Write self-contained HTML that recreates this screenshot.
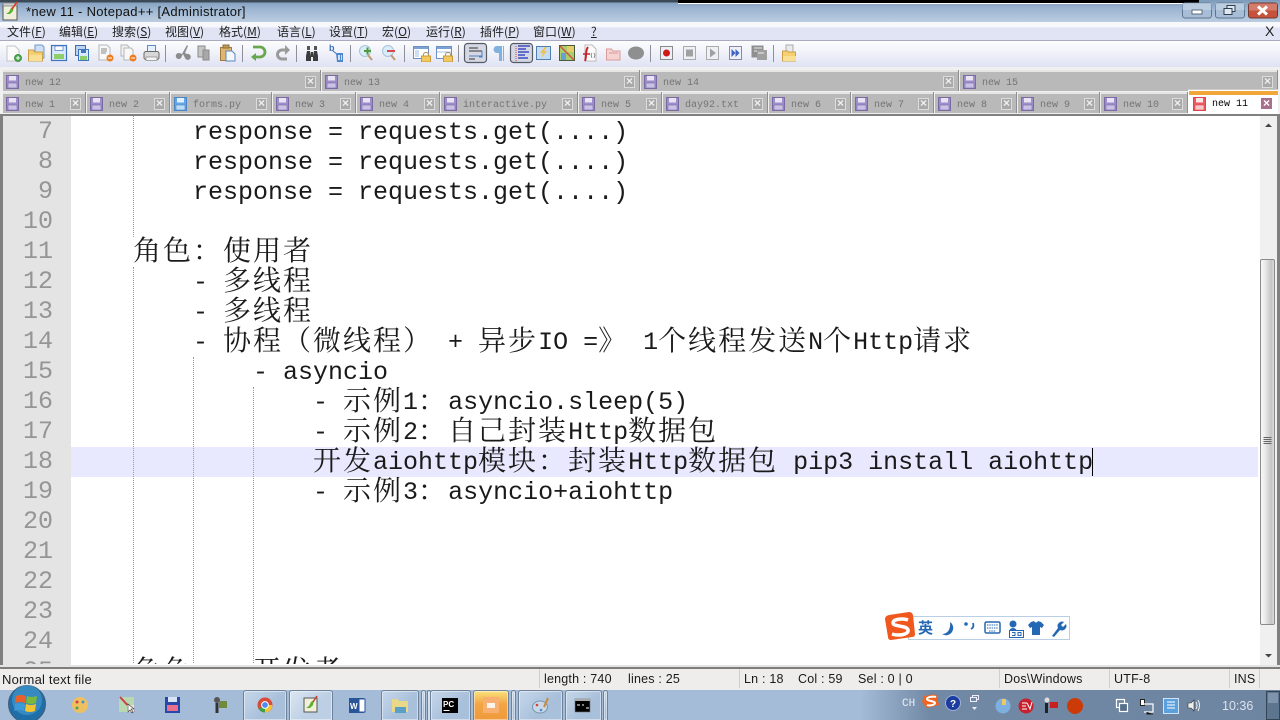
<!DOCTYPE html>
<html lang="zh"><head><meta charset="utf-8"><title>Notepad++</title>
<style>
html,body{margin:0;padding:0;width:1280px;height:720px;overflow:hidden;background:#fff}
body{position:relative;font-family:"Liberation Sans","Noto Sans CJK SC",sans-serif}
div,span.a{position:absolute}
#title{left:0;top:0;width:1280px;height:22px;background:linear-gradient(#7d9bbb,#9cb5d1 40%,#bccde1)}
#title .t{left:26px;top:4px;font-size:13px;letter-spacing:.3px;line-height:16px;color:#111;white-space:pre}
#menu{left:0;top:22px;width:1280px;height:19px;background:linear-gradient(#f7f8fc,#f7f8fc 25%,#dfe3f3 35%,#e0e4f4);border-bottom:1px solid #a9aabd;box-sizing:border-box}
#menu span{position:absolute;top:2px;font-size:12px;line-height:16px;color:#222;white-space:pre;font-family:"Noto Sans CJK SC","Liberation Sans",sans-serif}
#tool{left:0;top:41px;width:1280px;height:26px;background:linear-gradient(#fdfdfe,#f2f3fa 40%,#dfe2f3)}
#tabs{left:0;top:67px;width:1280px;height:47px;background:#f0f0f0}
.tab{background:#b9b9b9;border-top:2px solid #e6e6e6;box-sizing:border-box;height:21px;box-shadow:1px 0 0 #8e8e8e}
.r1{top:3px}.r2{top:25px}
.tab .n{left:22px;top:5px;font:10px/14px "Liberation Mono",monospace;color:#747474;white-space:pre}
.tab .x{top:4px;width:11px;height:12px;background:#a9a9a9;border:1px solid #dcdcdc;box-sizing:border-box;color:#f0f0f0;font:bold 12px/9px "Liberation Sans",sans-serif;text-align:center}
.tab svg{position:absolute;left:3px;top:3px}
#ed{left:0;top:114px;width:1280px;height:553px;background:#fff;border:solid #808080;border-width:2px 3px 2px 3px;box-sizing:border-box}
#gut{left:3px;top:116px;width:68px;height:549px;background:#e4e4e4}
#cur{left:71px;top:447px;width:1187px;height:30px;background:#e8e8ff}
.g{width:0;border-left:1px dotted #9a9a9a}
.l{height:30px;font:25px/30px "Liberation Mono",monospace;color:#1a1a1a;white-space:pre;margin-top:1px}
.l i{font:28px/0 "Noto Serif CJK SC","Noto Sans CJK SC",serif;letter-spacing:2px;position:relative;top:1px}
.ln{left:3px;width:50px;height:30px;text-align:right;font:25px/30px "Liberation Mono",monospace;color:#959595}
#clip{left:0;top:116px;width:1280px;height:548px;overflow:hidden}
#sb{left:1260px;top:116px;width:17px;height:549px;background:#f0f0f0}
#th{left:0;top:143px;width:15px;height:366px;border:1px solid #8b8b8b;border-radius:2px;box-sizing:border-box;background:linear-gradient(90deg,#f7f7f7,#eee 25%,#c4c4c4 80%,#dcdcdc)}
#st{left:0;top:669px;width:1280px;height:21px;background:#efecec;border-top:0}
#st span{position:absolute;top:2px;font-size:12.5px;letter-spacing:.2px;line-height:17px;color:#1a1a1a;white-space:pre}
#st u{position:absolute;top:0;width:1px;height:19px;background:#cfcfcf;text-decoration:none}
#tb{left:0;top:690px;width:1280px;height:30px;background:linear-gradient(90deg,#a5bcd8,#a5bcd8 860px,#7189a5 930px,#6d85a1)}
.b{top:0;height:30px;border:1px solid #6e829a;border-bottom:0;border-radius:3px 3px 0 0;box-sizing:border-box;background:linear-gradient(135deg,#c6d7ea,#a9c0db 60%);box-shadow:inset 0 0 0 1px rgba(255,255,255,.45)}
#ch{left:902px;top:697px;font:11px/14px "Liberation Mono",monospace;color:#e8eef5}
#clock{left:1222px;top:698px;font-size:12.5px;line-height:16px;color:#dbe3ec}
#sg{left:908px;top:616px;width:162px;height:24px;background:#fff;border:1px solid #b9cfe6;box-sizing:border-box}
#ying{left:918px;top:619px;font:bold 15px/18px "Noto Sans CJK SC",sans-serif;color:#2468b4}
#svg{left:0;top:0;position:absolute}
</style></head><body>

<div id="title"><div class="t">*new 11 - Notepad++ [Administrator]</div></div>
<div id="menu">
<span style="left:7px">文件(<u>F</u>)</span><span style="left:59px">编辑(<u>E</u>)</span><span style="left:112px">搜索(<u>S</u>)</span><span style="left:165px">视图(<u>V</u>)</span><span style="left:219px">格式(<u>M</u>)</span><span style="left:277px">语言(<u>L</u>)</span><span style="left:329px">设置(<u>T</u>)</span><span style="left:382px">宏(<u>O</u>)</span><span style="left:426px">运行(<u>R</u>)</span><span style="left:480px">插件(<u>P</u>)</span><span style="left:533px">窗口(<u>W</u>)</span><span style="left:591px"><u>?</u></span>
<span style="left:1265px;top:1px;font-size:14px;font-family:'Liberation Sans',sans-serif">X</span>
</div>
<div id="tool"></div>

<div id="tabs">
<div class="tab r1" style="left:3px;width:317px"><svg width="14" height="14"><use href="#fp"/></svg><div class="n">new 12</div><div class="x" style="left:302px">×</div></div>
<div class="tab r1" style="left:322px;width:317px"><svg width="14" height="14"><use href="#fp"/></svg><div class="n">new 13</div><div class="x" style="left:302px">×</div></div>
<div class="tab r1" style="left:641px;width:317px"><svg width="14" height="14"><use href="#fp"/></svg><div class="n">new 14</div><div class="x" style="left:302px">×</div></div>
<div class="tab r1" style="left:960px;width:317px"><svg width="14" height="14"><use href="#fp"/></svg><div class="n">new 15</div><div class="x" style="left:302px">×</div></div>

<div class="tab r2" style="left:3px;width:82px"><svg width="14" height="14"><use href="#fp"/></svg><div class="n">new 1</div><div class="x" style="left:67px">×</div></div>
<div class="tab r2" style="left:87px;width:82px"><svg width="14" height="14"><use href="#fp"/></svg><div class="n">new 2</div><div class="x" style="left:67px">×</div></div>
<div class="tab r2" style="left:171px;width:100px"><svg width="14" height="14"><use href="#fb"/></svg><div class="n">forms.py</div><div class="x" style="left:85px">×</div></div>
<div class="tab r2" style="left:273px;width:82px"><svg width="14" height="14"><use href="#fp"/></svg><div class="n">new 3</div><div class="x" style="left:67px">×</div></div>
<div class="tab r2" style="left:357px;width:82px"><svg width="14" height="14"><use href="#fp"/></svg><div class="n">new 4</div><div class="x" style="left:67px">×</div></div>
<div class="tab r2" style="left:441px;width:136px"><svg width="14" height="14"><use href="#fp"/></svg><div class="n">interactive.py</div><div class="x" style="left:121px">×</div></div>
<div class="tab r2" style="left:579px;width:82px"><svg width="14" height="14"><use href="#fp"/></svg><div class="n">new 5</div><div class="x" style="left:67px">×</div></div>
<div class="tab r2" style="left:663px;width:104px"><svg width="14" height="14"><use href="#fp"/></svg><div class="n">day92.txt</div><div class="x" style="left:89px">×</div></div>
<div class="tab r2" style="left:769px;width:81px"><svg width="14" height="14"><use href="#fp"/></svg><div class="n">new 6</div><div class="x" style="left:66px">×</div></div>
<div class="tab r2" style="left:852px;width:81px"><svg width="14" height="14"><use href="#fp"/></svg><div class="n">new 7</div><div class="x" style="left:66px">×</div></div>
<div class="tab r2" style="left:935px;width:81px"><svg width="14" height="14"><use href="#fp"/></svg><div class="n">new 8</div><div class="x" style="left:66px">×</div></div>
<div class="tab r2" style="left:1018px;width:81px"><svg width="14" height="14"><use href="#fp"/></svg><div class="n">new 9</div><div class="x" style="left:66px">×</div></div>
<div class="tab r2" style="left:1101px;width:86px"><svg width="14" height="14"><use href="#fp"/></svg><div class="n">new 10</div><div class="x" style="left:71px">×</div></div>
<div style="left:1188px;top:22px;width:90px;height:25px;background:#fff;border-top:1px solid #ccc;box-sizing:border-box"><div style="left:1px;top:1px;width:89px;height:4px;background:#f2a73a"></div>
<svg width="14" height="14" style="position:absolute;left:5px;top:7px"><use href="#fr"/></svg>
<div style="left:24px;top:8px;font:10px/14px 'Liberation Mono',monospace;color:#000;white-space:pre">new 11</div>
<div style="left:73px;top:8px;width:11px;height:11px;background:#a8708c;color:#fff;font:bold 12px/10px 'Liberation Sans',sans-serif;text-align:center">×</div></div>
</div>

<div id="ed"></div>
<div id="gut"></div>
<div id="cur"></div>
<div id="clip">
<div class="g" style="left:133px;top:0;height:121px"></div>
<div class="g" style="left:133px;top:151px;height:398px"></div>
<div class="g" style="left:193px;top:241px;height:308px"></div>
<div class="g" style="left:253px;top:271px;height:278px"></div>

<div class="ln" style="top:1px">7</div>
<div class="ln" style="top:31px">8</div>
<div class="ln" style="top:61px">9</div>
<div class="ln" style="top:91px">10</div>
<div class="ln" style="top:121px">11</div>
<div class="ln" style="top:151px">12</div>
<div class="ln" style="top:181px">13</div>
<div class="ln" style="top:211px">14</div>
<div class="ln" style="top:241px">15</div>
<div class="ln" style="top:271px">16</div>
<div class="ln" style="top:301px">17</div>
<div class="ln" style="top:331px">18</div>
<div class="ln" style="top:361px">19</div>
<div class="ln" style="top:391px">20</div>
<div class="ln" style="top:421px">21</div>
<div class="ln" style="top:451px">22</div>
<div class="ln" style="top:481px">23</div>
<div class="ln" style="top:511px">24</div>
<div class="ln" style="top:541px">25</div>

<div class="l" style="left:193px;top:1px">response = requests.get(....)</div>
<div class="l" style="left:193px;top:31px">response = requests.get(....)</div>
<div class="l" style="left:193px;top:61px">response = requests.get(....)</div>
<div class="l" style="left:133px;top:121px"><i>角色：使用者</i></div>
<div class="l" style="left:193px;top:151px">- <i>多线程</i></div>
<div class="l" style="left:193px;top:181px">- <i>多线程</i></div>
<div class="l" style="left:193px;top:211px">- <i>协程（微线程）</i> + <i>异步</i>IO =<i>》</i> 1<i>个线程发送</i>N<i>个</i>Http<i>请求</i></div>
<div class="l" style="left:253px;top:241px">- asyncio</div>
<div class="l" style="left:313px;top:271px">- <i>示例</i>1<i>：</i>asyncio.sleep(5)</div>
<div class="l" style="left:313px;top:301px">- <i>示例</i>2<i>：自己封装</i>Http<i>数据包</i></div>
<div class="l" style="left:313px;top:331px"><i>开发</i>aiohttp<i>模块：封装</i>Http<i>数据包</i> pip3 install aiohttp</div>
<div class="l" style="left:313px;top:361px">- <i>示例</i>3<i>：</i>asyncio+aiohttp</div>
<div class="l" style="left:133px;top:541px"><i>角色：</i>  <i>开发者</i></div>
<div style="left:1092px;top:332px;width:1px;height:28px;background:#000"></div>
</div>

<div id="sb"><div id="th"></div></div>

<div style="left:0;top:665px;width:1280px;height:2px;background:#e4e4e4"></div>
<div style="left:0;top:667px;width:1280px;height:2px;background:#7d7d7d"></div>
<div id="st">
<span style="left:2px;font-size:13px">Normal text file</span>
<u style="left:539px"></u><span style="left:544px">length : 740</span><span style="left:628px">lines : 25</span>
<u style="left:739px"></u><span style="left:744px">Ln : 18</span><span style="left:798px">Col : 59</span><span style="left:858px">Sel : 0 | 0</span>
<u style="left:999px"></u><span style="left:1004px">Dos\Windows</span>
<u style="left:1109px"></u><span style="left:1114px">UTF-8</span>
<u style="left:1229px"></u><span style="left:1234px">INS</span>
<u style="left:1259px"></u>
</div>

<div id="tb">
<div class="b" style="left:243px;width:44px"></div>
<div class="b" style="left:289px;width:44px;background:linear-gradient(135deg,#dbe6f2,#bccfe4 60%)"></div>
<div class="b" style="left:381px;width:38px"></div>
<div class="b" style="left:421px;width:5px"></div>
<div class="b" style="left:427px;width:4px"></div>
<div class="b" style="left:430px;width:41px"></div>
<div class="b" style="left:473px;width:36px;background:linear-gradient(#f9e27a,#f2a545 45%,#f09a3c)"></div>
<div class="b" style="left:511px;width:5px"></div>
<div class="b" style="left:518px;width:45px"></div>
<div class="b" style="left:565px;width:37px"></div>
<div class="b" style="left:603px;width:5px"></div>
</div>
<div id="sg"></div>

<svg id="svg" width="1280" height="720" viewBox="0 0 1280 720">
<defs>
<symbol id="fp" viewBox="0 0 14 14"><rect x=".5" y=".5" width="12" height="13" fill="#9d8dc9" stroke="#7c6aa5"/><rect x="3" y="1" width="7" height="4.5" fill="#e8e4f4"/><rect x="2" y="8" width="9" height="5" fill="#c8c2e6" stroke="#7c6aa5" stroke-width=".6"/></symbol>
<symbol id="fb" viewBox="0 0 14 14"><rect x=".5" y=".5" width="12" height="13" fill="#61a5e8" stroke="#4a86c4"/><rect x="3" y="1" width="7" height="4.5" fill="#e2f0fc"/><rect x="2" y="8" width="9" height="5" fill="#bcdcf6" stroke="#4a86c4" stroke-width=".6"/></symbol>
<symbol id="fr" viewBox="0 0 14 14"><rect x=".5" y=".5" width="12" height="13" fill="#ec5a60" stroke="#d84a50"/><rect x="3" y="1" width="7" height="4.5" fill="#fde8e8"/><rect x="2" y="8" width="9" height="5" fill="#f8c8c8" stroke="#d84a50" stroke-width=".6"/></symbol>
<symbol id="lock" viewBox="0 0 10 10"><path d="M2.5 4V2.5a2.5 2 0 0 1 5 0V4" fill="none" stroke="#a89060"/><rect x="0.5" y="4" width="9" height="6" fill="#f3c95e" stroke="#c89b3a"/></symbol>
</defs>

<!-- top edge -->
<rect x="0" y="0" width="678" height="2" fill="#3c4a58"/>
<rect x="0" y="2" width="678" height="1" fill="#64798f"/>
<rect x="678" y="0" width="521" height="3" fill="#000"/>
<rect x="678" y="3" width="521" height="1" fill="#fff"/>

<!-- title icon -->
<g><rect x="3" y="5" width="14" height="15" fill="#eeeeda" stroke="#555"/><rect x="3" y="3" width="14" height="3" fill="#cfcfcf" stroke="#666" stroke-width=".6"/><path d="M6 14l3-2 2-4 3-2-1 5-3 3z" fill="#5cae2e"/><path d="M12 9l5-7" stroke="#d8402c" stroke-width="1.6"/></g>

<!-- window buttons -->
<g stroke="#5c7690"><rect x="1182.5" y="3" width="29" height="15" rx="2.5" fill="#a8bdd6"/><rect x="1215.5" y="3" width="29" height="15" rx="2.5" fill="#a8bdd6"/></g>
<rect x="1248.5" y="3" width="29" height="15" rx="2.5" fill="#c4523c" stroke="#74382e"/>
<rect x="1182.5" y="3" width="29" height="7" fill="#c6d5e6" opacity=".6"/><rect x="1215.5" y="3" width="29" height="7" fill="#c6d5e6" opacity=".6"/><rect x="1249" y="3.5" width="28" height="7" fill="#e09a8a" opacity=".6"/>
<rect x="1192" y="10" width="10" height="4" fill="#fff" stroke="#3e4f60" stroke-width=".8"/>
<g fill="#dfe8f2" stroke="#2f4051"><rect x="1227" y="5.500" width="8" height="6"/><rect x="1224" y="8.500" width="8" height="6"/></g>
<path d="M1258 6.500l9 8M1267 6.500l-9 8" stroke="#fff" stroke-width="3"/>

<!-- toolbar separators -->
<g stroke="#8e8f9a"><path d="M165.500 45v17M242.500 45v17M296.500 45v17M350.500 45v17M404.500 45v17M458.500 45v17M650.500 45v17M773.500 45v17"/></g>

<!-- new -->
<path d="M7 46h8l4 4v11H7z" fill="#fbfbfb" stroke="#c4c4c4"/><circle cx="18" cy="58" r="3.600" fill="#46a846" stroke="#2e7a2e" stroke-width=".6"/><path d="M16 58h4M18 56v4" stroke="#fff"/>
<!-- open -->
<path d="M35 45h7l2 2v11h-9z" fill="#cfe0f5" stroke="#6f96cc"/><path d="M28.500 50h5l1 2h8v9h-14z" fill="#f6cf70" stroke="#c9a04a"/><path d="M29 55h13v6H29z" fill="#f9df94"/>
<!-- save -->
<rect x="51.500" y="45.500" width="15" height="15" fill="#d9e8fa" stroke="#3f74c0" stroke-width="1.200"/><rect x="55" y="46" width="8" height="4.500" fill="#fff" stroke="#3f74c0" stroke-width=".7"/><rect x="54" y="54" width="10" height="5" fill="#8fcf6a"/>
<!-- save all -->
<rect x="75.500" y="45.500" width="10" height="10" fill="#bcd4ef" stroke="#3f6faa"/><rect x="78.500" y="49.500" width="10" height="11" fill="#d9e8fa" stroke="#3f74c0"/><rect x="80" y="56" width="7" height="4" fill="#8fcf6a"/><rect x="81" y="50" width="5" height="3" fill="#3f74c0"/>
<!-- close -->
<path d="M99 45h8l3 3v12H99z" fill="#f8f8f8" stroke="#b6b6b6"/><path d="M101 49h6M101 51h6M101 53h5" stroke="#888"/><circle cx="110" cy="58" r="3.500" fill="#ee7d20"/><path d="M108 58h4" stroke="#fff"/>
<!-- close all -->
<path d="M121 45h6l2 2v9h-8z" fill="#f1f1f1" stroke="#b6b6b6"/><path d="M124 48h7l2 2v10h-9z" fill="#f8f8f8" stroke="#b6b6b6"/><circle cx="133" cy="58" r="3.500" fill="#ee7d20"/><path d="M131 58h4" stroke="#fff"/>
<!-- print -->
<rect x="147.500" y="45.500" width="8" height="7" fill="#e6f0fb" stroke="#5f8ac4"/><rect x="144" y="51.500" width="15" height="8" rx="2" fill="#d8d8d8" stroke="#6a6a6a"/><rect x="146" y="57" width="11" height="3.500" fill="#f4f4f4" stroke="#777" stroke-width=".6"/>
<!-- cut, copy, paste (disabled) -->
<path d="M187 45l-5 9-3-1a3 3 0 1 0 2 5l2-4 2 4a3 3 0 1 0 2-4l-2-1 3-7z" fill="#8c8c8c"/>
<g fill="#c6c6c6" stroke="#8a8a8a"><path d="M198 46h7v11h-7z"/><path d="M203 50h6v10h-6z" fill="#a8a8a8"/></g>
<rect x="220.500" y="47.500" width="11" height="13" fill="#e0b56e" stroke="#9c7a42"/><rect x="223" y="45" width="6" height="3" fill="#c49a52" stroke="#887040"/><path d="M226 51h6l3 3v7h-9z" fill="#f4f8fd" stroke="#5a86be"/>
<!-- undo redo -->
<path d="M253 47h7a5 5 0 0 1 0 10h-6" fill="none" stroke="#69a74e" stroke-width="2.800"/><path d="M256 53l-5 4 5 4z" fill="#69a74e"/>
<path d="M288 51h-6a4.500 4.500 0 0 0 0 9h5" fill="none" stroke="#9a9a9a" stroke-width="3" transform="translate(0 -1)"/><path d="M285 45l5 5-5 5z" fill="#9a9a9a"/>
<!-- find -->
<path d="M306 56v5h5v-5l-1-5h-3zM313 56v5h5v-5l-1-5h-3z" fill="#3c3c3c"/><path d="M311 52h2v5h-2z" fill="#3c3c3c"/><rect x="307" y="46" width="3" height="4" fill="#555"/><rect x="314" y="46" width="3" height="4" fill="#555"/>
<!-- replace -->
<text x="329" y="51" font-family="Liberation Sans" font-size="9" font-weight="bold" fill="#3a6fb8">b</text>
<path d="M333 51l9 7" stroke="#3a6fb8"/><path d="M336 53h7v9h-6z" fill="#4f86cc"/><path d="M338 55h2v5h-2zM341 55h1v5h-1z" fill="#cfe2f7"/>
<!-- zoom -->
<circle cx="365" cy="51" r="5.500" fill="#d8ecf9" stroke="#a8c4d8"/><path d="M368 55l4 5" stroke="#c49a6c" stroke-width="2"/><path d="M364 51h7M367.500 47.500v7" stroke="#4f9a3e" stroke-width="2"/>
<circle cx="388" cy="51" r="5.500" fill="#d8ecf9" stroke="#a8c4d8"/><path d="M391 55l4 5" stroke="#c49a6c" stroke-width="2"/><path d="M387 51h8" stroke="#d84a4a" stroke-width="2"/>
<!-- sync scroll -->
<g><rect x="413.500" y="46.500" width="15" height="12" fill="#fff" stroke="#6c90bf"/><rect x="414" y="47" width="14" height="2" fill="#7ba2d4"/><path d="M415 50h4v7h-4z" fill="#cfdff2"/><use href="#lock" x="421" y="52" width="10" height="10"/></g>
<g><rect x="436.500" y="46.500" width="15" height="12" fill="#fff" stroke="#6c90bf"/><rect x="437" y="47" width="14" height="2" fill="#7ba2d4"/><path d="M437 52h14" stroke="#a8c0de"/><use href="#lock" x="443" y="52" width="10" height="10"/></g>
<!-- wrap pressed -->
<rect x="464.500" y="43.500" width="22" height="19" rx="3" fill="#d5d8e3" stroke="#545b66" stroke-width="1.200"/>
<path d="M469 48h9M469 51h13M469 56h13M469 59h6" stroke="#333" stroke-width="1"/><path d="M482 51v6h-3" fill="none" stroke="#4a80c4"/><path d="M469 56h13" stroke="#4a80c4"/>
<!-- para -->
<path d="M502 46h-5a3 3 0 0 0 0 7h2v8h3zM503 46h1v15h-1z" fill="#7fb2de"/>
<!-- indent pressed -->
<rect x="510.500" y="43.500" width="22" height="19" rx="3" fill="#d5d8e3" stroke="#545b66" stroke-width="1.200"/>
<path d="M518 46h12M518 49h8M518 52h11M518 55h7M518 58h10" stroke="#1c2fbd" stroke-width="1.200"/><path d="M516 46v15" stroke="#d04040" stroke-dasharray="1 1"/>
<!-- 543 doc map -->
<rect x="536.500" y="46.500" width="14" height="13" fill="#c6dcf2" stroke="#4f7eb4"/><path d="M545 47l-5 6h3l-2 5 6-7h-3l3-4z" fill="#efc04a"/>
<!-- 567 -->
<rect x="559.500" y="45.500" width="15" height="15" fill="#a8cf6e" stroke="#4a5a3a"/><path d="M560 46l14 14" stroke="#d8503a" stroke-width="1.500"/><path d="M567 46h7v6h-7z" fill="#e6cc6a"/><path d="M561 53h5v7h-5z" fill="#6aa0d0"/>
<!-- 590 -->
<path d="M585 45h7l4 4v12h-11z" fill="#fbfbfb" stroke="#bcbcbc"/><path d="M588 47c-3 4-1 8-3 14" stroke="#c8242c" stroke-width="2" fill="none"/><path d="M583 54h7" stroke="#c8242c" stroke-width="1.500"/><path d="M592 53l-1 2 1 3M594 53l1 2-1 3" stroke="#666" fill="none" stroke-width=".7"/>
<!-- 613 folder red -->
<path d="M606.500 49h5l1.500 2h7v9h-13.500z" fill="#f6d2d0" stroke="#d89c9a"/><path d="M609 53h9" stroke="#d89c9a"/>
<!-- 636 -->
<ellipse cx="636" cy="53" rx="8" ry="6.500" fill="#8f8f8f"/>
<!-- macro -->
<rect x="660.500" y="46.500" width="12" height="13" fill="#eef0f8" stroke="#8a8a8a"/><circle cx="666.500" cy="53" r="3.500" fill="#d01818"/>
<rect x="683.500" y="46.500" width="12" height="13" fill="#eef0f8" stroke="#aaa"/><rect x="686" y="49.500" width="7" height="7" fill="#a0a0a0"/>
<rect x="706.500" y="46.500" width="12" height="13" fill="#eef0f8" stroke="#aaa"/><path d="M710 48.500l6 4.500-6 4.500z" fill="#a0a0a0"/>
<rect x="729.500" y="46.500" width="12" height="13" fill="#eef0f8" stroke="#8a8aa8"/><path d="M731.500 49l4 4-4 4zM735.500 49l4 4-4 4z" fill="#3f62c8"/>
<rect x="751.500" y="45.500" width="12" height="12" fill="#8f8f8f"/><rect x="757" y="50" width="10" height="10" fill="#a0a0a0"/><path d="M754 48h8M754 51h3M758 53h6" stroke="#eee"/>
<!-- 789 folder -->
<path d="M786 45h7v9h-7z" fill="#eaeaea" stroke="#aaa"/><path d="M782.500 51h5l1 1h7v9h-13z" fill="#f6cf70" stroke="#c9a04a"/><path d="M783 56h13v5h-13z" fill="#f9df94"/>

<!-- scrollbar arrows -->
<path d="M1265 127l3.500-3.500 3.500 3.500z" fill="#444"/>
<path d="M1265 654l3.500 3.500 3.500-3.500z" fill="#444"/>
<path d="M1263.500 437.500h8M1263.500 439.500h8M1263.500 441.500h8M1263.500 443.500h8" stroke="#666"/>

<!-- sogou -->
<path d="M889 615l20-3q3 0 4 3l2 19q0 3-3 3l-21 3q-3 0-3-3l-3-18q0-3 4-4z" fill="#f0581e"/>
<path d="M908 620c-5-2-15-1-15 3s14 2 15 7-10 6-16 4" fill="none" stroke="#fff" stroke-width="3.500"/>
<path d="M950 622a7 7 0 1 1-8 12c4 0 9-3 8-12z" fill="#2468b4"/>
<circle cx="966" cy="624" r="1.800" fill="#2468b4"/><path d="M973 623c1 3 0 5-2 6" stroke="#2468b4" stroke-width="1.800" fill="none"/>
<rect x="985" y="622" width="15" height="11" rx="1.500" fill="#fff" stroke="#2468b4" stroke-width="1.500"/><path d="M987 625h11M987 628h11M989 631h7" stroke="#2468b4" stroke-dasharray="1.500 .8"/>
<circle cx="1013" cy="624" r="3.500" fill="#2468b4"/><path d="M1009 635v-3a4 4 0 0 1 8 0v3z" fill="#2468b4"/><rect x="1009.500" y="630.500" width="14" height="7" fill="#fff" stroke="#2468b4"/><path d="M1012 632.500h3v3h-3M1018 632.500v3h3v-3z" fill="none" stroke="#2468b4"/>
<path d="M1031 622l3-1c1 2 3 2 4 0l3 1 3 3-2 3-2-1v8h-8v-8l-2 1-2-3z" fill="#2468b4"/>
<path d="M1052 636l6-8a4.500 4.500 0 0 1 6-6l-3 3 2 2 3-3a4.500 4.500 0 0 1-6 6l-6 7z" fill="#2468b4"/>

<!-- start orb -->
<circle cx="27" cy="704" r="18.500" fill="#1f6ea8" stroke="#3d5e7c"/>
<circle cx="27" cy="700" r="15" fill="#4fa6d8" opacity=".5"/>
<path d="M16 696q5-2 10 0l-1 7q-5-2-10 0z" fill="#e8612c"/><path d="M27 696q5 2 10 0l-1 7q-5 2-10 0z" fill="#7cb93a"/><path d="M15 704q5-2 10 0l-1 7q-5-2-10 0z" fill="#3d9ad8"/><path d="M26 704q5 2 10 0l-1 7q-5 2-10 0z" fill="#f4c430"/>
<!-- pinned -->
<circle cx="80" cy="705" r="8" fill="#efc060"/><circle cx="77" cy="702" r="1.500" fill="#d84040"/><circle cx="83" cy="702" r="1.500" fill="#4a90d0"/><circle cx="77" cy="708" r="1.500" fill="#50a050"/>
<rect x="119" y="697" width="15" height="15" fill="#b8d8b0"/><path d="M120 697l14 15" stroke="#c8404c" stroke-width="2"/><path d="M127 705h7v7h-7z" fill="#f4e0c8"/><path d="M128 704v8l2-2 2 3 1-1-2-3h3z" fill="#fff" stroke="#333" stroke-width=".6"/>
<rect x="165" y="697" width="15" height="16" fill="#2748a8"/><rect x="168" y="697" width="9" height="5" fill="#d8e4f6"/><rect x="167" y="705" width="11" height="6" fill="#e8708c"/>
<circle cx="217" cy="700" r="3" fill="#555"/><rect x="215.500" y="703" width="3" height="10" fill="#333"/><rect x="219" y="701" width="8" height="7" fill="#6e8a3a"/>
<!-- chrome -->
<circle cx="265" cy="705" r="7.500" fill="#d94a38"/><path d="M265 705l-6.500 3.800A7.500 7.500 0 0 0 265 712.500l3.700-6z" fill="#3fa24a"/><path d="M265 705h7.300a7.500 7.500 0 0 1-7.300 7.500z" fill="#f4c430"/><circle cx="265" cy="705" r="3.400" fill="#4a8cf0" stroke="#fff"/>
<!-- npp -->
<rect x="304" y="698" width="13" height="14" fill="#f0f0da" stroke="#555"/><path d="M306 708l3-2 2-4 3-2-1 5-3 3z" fill="#5cae2e"/><path d="M313 702l4-6" stroke="#c8402c" stroke-width="1.500"/>
<!-- word -->
<rect x="349" y="698" width="15" height="15" fill="#2a5699"/><rect x="359" y="699" width="6" height="13" fill="#fff" stroke="#2a5699"/><text x="350" y="709" font-family="Liberation Sans" font-size="8" font-weight="bold" fill="#fff">W</text>
<!-- explorer -->
<path d="M392 699h6l1 2h9v11h-16z" fill="#e8d888"/><path d="M395 707h11v6h-11z" fill="#58a0c8"/>
<!-- pycharm -->
<rect x="442" y="698" width="16" height="15" fill="#000"/><text x="443" y="707" font-family="Liberation Sans" font-size="8" font-weight="bold" fill="#fff">PC</text><rect x="443.500" y="710" width="6" height="1" fill="#fff"/>
<!-- orange app -->
<rect x="483" y="697" width="16" height="16" fill="#f8b070"/><rect x="487" y="703" width="8" height="5" fill="#fff" opacity=".85"/>
<!-- paint -->
<ellipse cx="540" cy="707" rx="7.500" ry="6" fill="#c8d8e8" stroke="#7a96b0"/><circle cx="537" cy="705" r="1.300" fill="#d84040"/><circle cx="541" cy="710" r="1.300" fill="#4a90d0"/><path d="M544 707l4-9" stroke="#c88a38" stroke-width="2"/>
<!-- cmd -->
<rect x="575" y="699" width="15" height="13" fill="#000" stroke="#777" stroke-width=".6"/><rect x="575" y="699" width="15" height="2" fill="#aaa"/><path d="M577 705h3M582 705h2M586 708h3" stroke="#fff"/>

<!-- tray -->
<path d="M924 696l12-2 3 11-12 3-5-6z" fill="#ef6420"/><path d="M936 697c-3-1-9 0-9 2s8 2 8 4-6 3-8 2" fill="none" stroke="#fff" stroke-width="2"/>
<circle cx="953" cy="703" r="7.500" fill="#1c3ca0" stroke="#9cb0d8"/><text x="950" y="707" font-family="Liberation Sans" font-size="10" font-weight="bold" fill="#fff">?</text>
<rect x="972.500" y="695.500" width="6" height="4" fill="none" stroke="#eef"/><rect x="970.500" y="697.500" width="6" height="4" fill="#7189a5" stroke="#eef"/>
<path d="M972 707h5l-2.500 3z" fill="#e8eef5"/>
<circle cx="1003" cy="706" r="7.500" fill="#7cb0e0"/><path d="M1002 699h4v6h-4z" fill="#f0c860"/>
<circle cx="1026" cy="706" r="7.500" fill="#c8202c"/><path d="M1022 703h5M1022 706h4M1022 709h5M1027 703l3 6 2-7" stroke="#fff" fill="none"/>
<circle cx="1047" cy="700" r="2.500" fill="#ddd"/><rect x="1045" y="703" width="3" height="10" fill="#222"/><rect x="1050" y="702" width="8" height="6" fill="#c82020"/>
<circle cx="1075" cy="706" r="8" fill="#cc3a08"/>
<rect x="1116.500" y="699.500" width="8" height="8" fill="none" stroke="#fff" stroke-width="1.200"/><rect x="1119.500" y="703.500" width="8" height="8" fill="#56708c" stroke="#fff" stroke-width="1.200"/>
<rect x="1140.500" y="699.500" width="4" height="6" fill="#fff" stroke="#222"/><path d="M1144 704h9v8h-9" fill="none" stroke="#fff" stroke-width="1.200"/><path d="M1147 712v2h6" stroke="#222"/>
<rect x="1163.500" y="698.500" width="15" height="15" fill="#5aa0dc" stroke="#cfe4f8"/><path d="M1167 702h8M1167 705h8M1167 708h8" stroke="#fff"/>
<path d="M1188 703h3l3-3v11l-3-3h-3z" fill="#eee" stroke="#333" stroke-width=".6"/><path d="M1196 702q2 3.500 0 7M1198 700q3 5 0 11" fill="none" stroke="#f0f0f0"/>
<rect x="1266.500" y="691.500" width="13" height="28" fill="#5e7590" stroke="#344556"/><rect x="1268" y="693" width="10" height="10" fill="#7f94ac"/>
</svg>

<div id="ying">英</div>
<div id="ch">CH</div>
<div id="clock">10:36</div>
</body></html>
